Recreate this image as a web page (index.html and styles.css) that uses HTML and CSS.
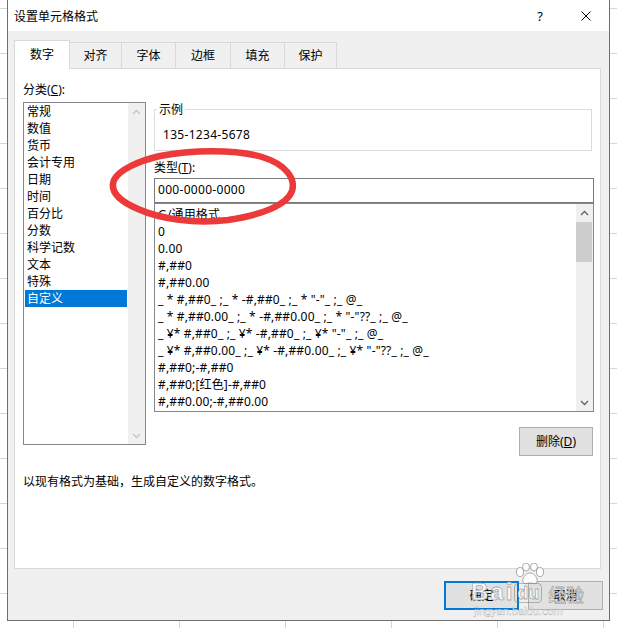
FILE: index.html
```html
<!DOCTYPE html>
<html lang="zh-CN">
<head>
<meta charset="utf-8">
<title>设置单元格格式</title>
<link rel="stylesheet" href="styles.css">
</head>
<body>
<div class="page">
  <div class="dialog">
    <div class="titlebar">
      <span class="title">设置单元格格式</span>
      <div class="tb-btns">
        <div class="tb-btn help">?</div>
        <div class="tb-btn close">
          <svg width="10" height="10" viewBox="0 0 10 10"><path d="M0.5 0.5 L9.5 9.5 M9.5 0.5 L0.5 9.5" stroke="#000" stroke-width="1" fill="none"/></svg>
        </div>
      </div>
    </div>
    <div class="body">
      <div class="tabs">
        <div class="tab active t1">数字</div>
        <div class="tab t2">对齐</div>
        <div class="tab t3">字体</div>
        <div class="tab t4">边框</div>
        <div class="tab t5">填充</div>
        <div class="tab t6">保护</div>
      </div>
      <div class="panel">
        <div class="cols">
          <div class="left">
            <div class="label">分类(<u>C</u>):</div>
            <div class="listbox cat">
              <div class="items">
                <div class="item">常规</div>
                <div class="item">数值</div>
                <div class="item">货币</div>
                <div class="item">会计专用</div>
                <div class="item">日期</div>
                <div class="item">时间</div>
                <div class="item">百分比</div>
                <div class="item">分数</div>
                <div class="item">科学记数</div>
                <div class="item">文本</div>
                <div class="item">特殊</div>
                <div class="item selected">自定义</div>
              </div>
              <div class="vscroll disabled">
                <div class="arrow"><svg width="9" height="6" viewBox="0 0 9 6"><polyline points="1,5 4.5,1.5 8,5" fill="none" stroke="currentColor" stroke-width="1.3"/></svg></div>
                <div class="track"></div>
                <div class="arrow"><svg width="9" height="6" viewBox="0 0 9 6"><polyline points="1,1 4.5,4.5 8,1" fill="none" stroke="currentColor" stroke-width="1.3"/></svg></div>
              </div>
            </div>
          </div>
          <div class="right">
            <div class="sample">
              <div class="legend">示例</div>
              <div class="sample-value">135-1234-5678</div>
            </div>
            <div class="label type-label">类型(<u>T</u>):</div>
            <div class="input">000-0000-0000</div>
            <div class="listbox fmt">
              <div class="items">
                <div class="item">G/通用格式</div>
                <div class="item">0</div>
                <div class="item">0.00</div>
                <div class="item">#,##0</div>
                <div class="item">#,##0.00</div>
                <div class="item">_ * #,##0_ ;_ * -#,##0_ ;_ * "-"_ ;_ @_</div>
                <div class="item">_ * #,##0.00_ ;_ * -#,##0.00_ ;_ * "-"??_ ;_ @_</div>
                <div class="item">_ ¥* #,##0_ ;_ ¥* -#,##0_ ;_ ¥* "-"_ ;_ @_</div>
                <div class="item">_ ¥* #,##0.00_ ;_ ¥* -#,##0.00_ ;_ ¥* "-"??_ ;_ @_</div>
                <div class="item">#,##0;-#,##0</div>
                <div class="item">#,##0;[红色]-#,##0</div>
                <div class="item">#,##0.00;-#,##0.00</div>
              </div>
              <div class="vscroll">
                <div class="arrow"><svg width="9" height="6" viewBox="0 0 9 6"><polyline points="1,5 4.5,1.5 8,5" fill="none" stroke="currentColor" stroke-width="1.3"/></svg></div>
                <div class="track"><div class="thumb"></div></div>
                <div class="arrow"><svg width="9" height="6" viewBox="0 0 9 6"><polyline points="1,1 4.5,4.5 8,1" fill="none" stroke="currentColor" stroke-width="1.3"/></svg></div>
              </div>
            </div>
            <div class="btn-row">
              <div class="btn del">删除(<u>D</u>)</div>
            </div>
          </div>
        </div>
        <div class="desc">以现有格式为基础，生成自定义的数字格式。</div>
      </div>
      <div class="footer">
        <div class="btn primary">确定</div>
        <div class="btn">取消</div>
      </div>
    </div>
  </div>
</div>

<svg class="annot" width="617" height="628" viewBox="0 0 617 628">
  <path d="M160 156 C 190 150, 235 149, 262 157 C 285 164, 296 178, 292 191 C 287 205, 262 215, 228 220 C 195 224, 160 219, 138 209 C 117 200, 110 190, 114 180 C 119 170, 138 161, 160 156 Z" fill="none" stroke="#ec3a3a" stroke-width="6.5"/>
</svg>

<div class="watermark">
  <svg class="paw" width="32" height="22" viewBox="0 0 32 22">
    <g fill="rgba(255,255,255,0.88)" stroke="rgba(120,120,120,0.6)" stroke-width="1">
      <ellipse cx="6" cy="9" rx="3.5" ry="4.5"/>
      <ellipse cx="12" cy="4" rx="3.5" ry="4"/>
      <ellipse cx="20" cy="4" rx="3.5" ry="4"/>
      <ellipse cx="26" cy="9" rx="3.5" ry="4.5"/>
      <path d="M16 10 C 11 10, 8 16, 9 19 C 10 22, 14 20, 16 20 C 18 20, 22 22, 23 19 C 24 16, 21 10, 16 10 Z"/>
    </g>
  </svg>
  <div class="wm-row">
    <span class="wm-bai">Bai</span><span class="wm-du">du</span><span class="wm-jy">经验</span>
  </div>
  <div class="wm-url">jingyan.baidu.com</div>
</div>
</body>
</html>
```

FILE: styles.css
```css
html, body {
  margin: 0;
  height: 100%;
}

body {
  background-color: #ffffff;
  background-image:
    linear-gradient(to right, #d6d6d6 1px, transparent 1px),
    linear-gradient(to bottom, #d6d6d6 1px, transparent 1px);
  background-size: 106px 45px;
  background-position: 73px 8px;
  font-family: "Noto Sans", "Noto Sans CJK SC", sans-serif;
  font-size: 12px;
  color: #000;
  overflow: hidden;
  position: relative;
}

.page {
  padding-left: 7px;
}

.dialog {
  width: 603px;
  height: 621px;
  box-sizing: border-box;
  border: 1px solid #6e6e6e;
  border-top: none;
  display: flex;
  flex-direction: column;
}

/* title bar */
.titlebar {
  height: 31px;
  background: #fff;
  display: flex;
  align-items: center;
}
.title {
  padding-left: 6px;
  line-height: 17px;
  margin-top: 1px;
}
.tb-btns {
  margin-left: auto;
  display: flex;
}
.tb-btn {
  width: 46px;
  height: 31px;
  display: flex;
  align-items: center;
  justify-content: center;
}
.tb-btn.help {
  font-size: 13px;
}

/* body */
.body {
  flex: 1;
  background: #f0f0f0;
  padding-top: 9px;
  display: flex;
  flex-direction: column;
}

.tabs {
  display: flex;
  padding-left: 6px;
  height: 28px;
  position: relative;
  z-index: 1;
}
.tab {
  box-sizing: border-box;
  height: 26px;
  margin-top: 2px;
  border: 1px solid #d9d9d9;
  border-bottom: none;
  background: #f0f0f0;
  display: flex;
  align-items: center;
  justify-content: center;
  margin-left: -1px;
  line-height: 17px;
}
.tab.active {
  height: 29px;
  margin-top: 0;
  background: #fff;
  margin-left: 0;
  padding-bottom: 2px;
}
.t1 { width: 56px; }
.t2 { width: 53px; }
.t3 { width: 55px; }
.t4 { width: 56px; }
.t5 { width: 55px; }
.t6 { width: 53px; }

.panel {
  box-sizing: border-box;
  margin-left: 6px;
  width: 587px;
  height: 501px;
  background: #fff;
  border: 1px solid #d9d9d9;
  padding: 12px 6px 0 8px;
}

.cols {
  display: flex;
  gap: 8px;
}
.left {
  width: 123px;
}
.right {
  width: 440px;
}

.label {
  line-height: 17px;
  height: 17px;
}
u {
  text-decoration: underline;
  text-underline-offset: 1px;
}

.listbox {
  box-sizing: border-box;
  border: 1px solid #828790;
  background: #fff;
  display: flex;
}
.listbox .items {
  flex: 1;
  overflow: hidden;
}
.item {
  line-height: 17px;
  height: 17px;
  white-space: nowrap;
}

.cat {
  margin-top: 4px;
  height: 343px;
}
.cat .item {
  margin: 0 1px;
  padding-left: 2px;
}
.cat .item.selected {
  background: #0078d7;
  color: #fff;
}

.vscroll {
  width: 17px;
  background: #f0f0f0;
  display: flex;
  flex-direction: column;
  color: #606060;
}
.vscroll.disabled {
  color: #c4c4c4;
}
.vscroll .arrow {
  height: 17px;
  display: flex;
  align-items: center;
  justify-content: center;
}
.vscroll .track {
  flex: 1;
}
.thumb {
  margin: 1px 1px 0 0;
  height: 40px;
  background: #cdcdcd;
}

/* right column */
.sample {
  box-sizing: border-box;
  margin-top: 28px;
  height: 42px;
  width: 438px;
  border: 1px solid #dcdcdc;
}
.legend {
  width: max-content;
  margin-top: -7px;
  margin-left: 2px;
  padding: 0 2px;
  background: #fff;
  line-height: 14px;
  height: 14px;
}
.sample-value {
  margin-top: 9px;
  padding-left: 8px;
  line-height: 18px;
  letter-spacing: 0.3px;
}

.type-label {
  margin-top: 8px;
}

.input {
  box-sizing: border-box;
  margin-top: 2px;
  height: 25px;
  border: 1px solid #7a7a7a;
  padding-left: 3px;
  line-height: 21px;
  letter-spacing: 0.3px;
}

.fmt {
  height: 209px;
}
.fmt .items {
  padding-top: 2px;
}
.fmt .item {
  padding-left: 3px;
  letter-spacing: 0.15px;
}

.btn-row {
  display: flex;
  justify-content: flex-end;
  margin-top: 15px;
  padding-right: 1px;
}

.btn {
  box-sizing: border-box;
  width: 75px;
  height: 29px;
  border: 1px solid #adadad;
  background: #e1e1e1;
  display: flex;
  align-items: center;
  justify-content: center;
  line-height: 17px;
}
.btn.del {
  width: 74px;
}
.btn.primary {
  border: 2px solid #0078d7;
}

.desc {
  margin-top: 17px;
  line-height: 17px;
}

.footer {
  display: flex;
  justify-content: flex-end;
  gap: 9px;
  margin-top: 12px;
  padding-right: 6px;
}

/* annotation overlay */
.annot {
  position: absolute;
  left: 0;
  top: 0;
  pointer-events: none;
}

/* watermark overlay */
.watermark {
  position: absolute;
  left: 471px;
  top: 563px;
  width: 120px;
  pointer-events: none;
  color: rgba(255, 255, 255, 0.88);
}
.paw {
  display: block;
  margin-left: 43px;
}
.wm-row {
  display: flex;
  align-items: flex-end;
  margin-top: -4px;
  height: 22px;
}
.wm-bai {
  font-family: "Liberation Sans", sans-serif;
  font-weight: bold;
  font-size: 24px;
  line-height: 22px;
  letter-spacing: 2px;
  -webkit-text-stroke: 0.8px rgba(120, 120, 120, 0.6);
}
.wm-du {
  font-family: "Liberation Sans", sans-serif;
  font-weight: bold;
  font-size: 18px;
  line-height: 18px;
  margin-left: 0;
  padding: 0 2px;
  border: 1px solid rgba(130, 130, 130, 0.55);
  border-radius: 4px;
  -webkit-text-stroke: 0.8px rgba(120, 120, 120, 0.6);
}
.wm-jy {
  font-family: "Noto Sans CJK SC", sans-serif;
  font-size: 18px;
  line-height: 18px;
  margin-left: 6px;
  -webkit-text-stroke: 0.8px rgba(120, 120, 120, 0.6);
}
.wm-url {
  font-family: "Liberation Sans", sans-serif;
  font-size: 11px;
  line-height: 12px;
  margin-left: 3px;
  margin-top: 2px;
  -webkit-text-stroke: 0.4px rgba(120, 120, 120, 0.55);
}
```
